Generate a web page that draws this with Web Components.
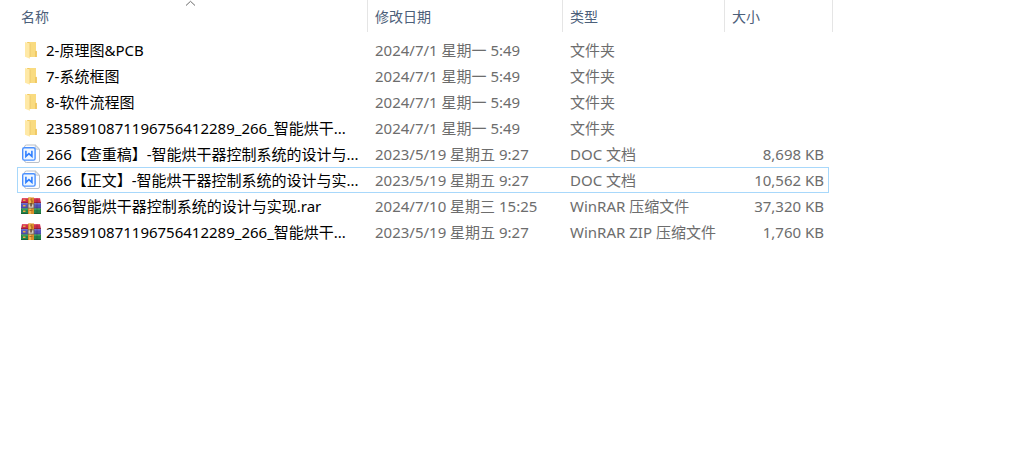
<!DOCTYPE html>
<html lang="zh-CN">
<head>
<meta charset="utf-8">
<meta name="viewport" content="width=device-width, initial-scale=1">
<title>文件列表</title>
<style>
  body {
    margin: 0;
    background: #fff;
    font: 15px/20px "Noto Sans", "Noto Sans CJK SC", sans-serif;
  }
</style>
</head>
<body>
<file-list></file-list>

<script>
const ICONS = {
  folder: `
    <svg viewBox="0 0 20 20" width="20" height="20" aria-hidden="true">
      <path d="M6 2h9v8.500l.8 1V17H6z" fill="#f3cb62"/>
      <path d="M8.500 2H15v15H8.500z" fill="#f9db80"/>
      <path d="M14 11h1.800v6H14z" fill="#f0c865"/>
      <path d="M4 2l5 1.600v15.200L4 16.800z" fill="#ffe9a6"/>
      <path d="M9 3.600v13.400" stroke="#eac568" stroke-width=".8"/>
    </svg>`,
  doc: `
    <svg viewBox="0 0 20 20" width="20" height="20" aria-hidden="true">
      <path d="M5.500 1h8.800L18.500 5.200v11.800a1.500 1.500 0 0 1-1.500 1.500H5.500A2 2 0 0 1 3.500 16.500V3A2 2 0 0 1 5.500 1z" fill="#fdfdfe" stroke="#b9c0ca"/>
      <path d="M14.300 1v2.700a1.500 1.500 0 0 0 1.500 1.500h2.700z" fill="#e6eaf0" stroke="#b9c0ca" stroke-width=".8"/>
      <rect x="1.700" y="3.700" width="12.400" height="12.400" rx="1.600" fill="#eef6ff" stroke="#4a90ff" stroke-width="1.400"/>
      <path d="M4.900 6.800v5.600L7.900 9.700l3 2.700V6.800" fill="none" stroke="#2f7fff" stroke-width="1.600"/>
    </svg>`,
  rar: `
    <svg viewBox="0 0 20 20" width="20" height="20" aria-hidden="true">
      <path d="M1 2h18l1 5H0z" fill="#c92b4b"/>
      <path d="M1 2h18v1.200H1z" fill="#e3526b"/>
      <path d="M0 6.400h20v.8H0z" fill="#7d1a30"/>
      <path d="M0 7.200h20v5H0z" fill="#5153ba"/>
      <path d="M1 7.200h18v1.200H1z" fill="#7471d2"/>
      <path d="M0 11.800h20v.8H0z" fill="#332c62"/>
      <path d="M0 12.600h20V18H0z" fill="#238349"/>
      <path d="M1 12.600h18v1.200H1z" fill="#3da762"/>
      <path d="M0 17.200h20v.8H0z" fill="#165a32"/>
      <path d="M2 3.500h2.500v1.500H2zM2 9h2.500v1.500H2zM2 14.500h2.500V16H2z" fill="#e6aa42"/>
      <path d="M15.500 2h1v16h-1z" fill="#332338" opacity=".25"/>
      <path d="M7 1.500h6V18H7z" fill="#d98c2b"/>
      <path d="M8 1.500h2V18H8z" fill="#f1b54e"/>
      <path d="M9.500 2.500h1v2h-1zM10.500 4.500h1v2h-1z" fill="#9b581c"/>
      <path d="M6.500 7.500h7v5h-7z" fill="#6f625a"/>
      <path d="M7.500 8.300h5v3.400h-5z" fill="#d5cdbd"/>
      <path d="M9.300 7h1.500v3.500H9.300z" fill="#69462c"/>
      <path d="M8.500 14h3v1h-3z" fill="#b06c22"/>
    </svg>`
};

const FILES = [
  { icon: "folder", name: "2-原理图&PCB", date: "2024/7/1 星期一 5:49", type: "文件夹", size: "" },
  { icon: "folder", name: "7-系统框图", date: "2024/7/1 星期一 5:49", type: "文件夹", size: "" },
  { icon: "folder", name: "8-软件流程图", date: "2024/7/1 星期一 5:49", type: "文件夹", size: "" },
  { icon: "folder", name: "2358910871196756412289_266_智能烘干...", date: "2024/7/1 星期一 5:49", type: "文件夹", size: "" },
  { icon: "doc", name: "266【查重稿】-智能烘干器控制系统的设计与...", date: "2023/5/19 星期五 9:27", type: "DOC 文档", size: "8,698 KB" },
  { icon: "doc", name: "266【正文】-智能烘干器控制系统的设计与实...", date: "2023/5/19 星期五 9:27", type: "DOC 文档", size: "10,562 KB", focused: true },
  { icon: "rar", name: "266智能烘干器控制系统的设计与实现.rar", date: "2024/7/10 星期三 15:25", type: "WinRAR 压缩文件", size: "37,320 KB" },
  { icon: "rar", name: "2358910871196756412289_266_智能烘干...", date: "2023/5/19 星期五 9:27", type: "WinRAR ZIP 压缩文件", size: "1,760 KB" }
];

class FileIcon extends HTMLElement {
  connectedCallback() {
    if (this.shadowRoot) {
      return;
    }
    this.attachShadow({ mode: "open" });
    this.shadowRoot.innerHTML = `
      <style>
        :host {
          display: block;
          flex: none;
          width: 20px;
          height: 20px;
        }

        svg {
          display: block;
        }
      </style>
      ${ICONS[this.getAttribute("kind")]}
    `;
  }
}

class ColumnHeader extends HTMLElement {
  constructor() {
    super();
    this.attachShadow({ mode: "open" });
    this.shadowRoot.innerHTML = `
      <style>
        :host {
          display: block;
          position: relative;
        }

        button {
          display: block;
          width: 100%;
          height: 32px;
          padding: 2px 0 0 var(--inset, 7px);
          border: 0;
          border-right: 1px solid #e5e5e5;
          background: none;
          color: #4c607a;
          font: inherit;
          font-size: 14px;
          text-align: left;
        }

        .arrow {
          display: none;
          position: absolute;
          top: 0;
          left: 50%;
          transform: translateX(-50%);
        }

        :host([sorted]) .arrow {
          display: block;
        }
      </style>
      <button type="button"><slot></slot></button>
      <svg class="arrow" viewBox="0 0 16 7" width="16" height="7" aria-hidden="true">
        <path d="M1 5.500l4.500-4.200L10 5.500" fill="none" stroke="#6b6b6b"/>
      </svg>
    `;
  }
}

class FileList extends HTMLElement {
  constructor() {
    super();
    this.attachShadow({ mode: "open" });
    this.shadowRoot.innerHTML = `
      <style>
        :host {
          display: block;
          padding-left: 17px;
        }

        table {
          width: 100%;
          table-layout: fixed;
          border-collapse: separate;
          border-spacing: 0;
        }

        .col-name { width: 351px; }
        .col-date { width: 195px; }
        .col-type { width: 162px; }
        .col-size { width: 104px; }
        .col-edge { width: 4px; }

        th {
          padding: 0;
          font-weight: normal;
        }

        th:first-child {
          --inset: 4px;
        }

        /* space between the header and the first row */
        tbody::before {
          content: "";
          display: block;
          height: 5px;
        }

        td {
          box-sizing: border-box;
          height: 26px;
          padding: 0 0 0 7px;
          border: solid transparent;
          border-width: 1px 0;
          color: #6d6d6d;
          white-space: nowrap;
        }

        td.name {
          padding-left: 3px;
          border-left-width: 1px;
          color: #000;
        }

        td.size {
          padding: 0 4px 0 0;
          border-right-width: 1px;
          text-align: right;
        }

        tr.focused td {
          border-color: #a8d8fb;
        }

        .entry {
          display: flex;
          align-items: center;
          gap: 5px;
        }
      </style>
      <table>
        <colgroup>
          <col class="col-name">
          <col class="col-date">
          <col class="col-type">
          <col class="col-size">
          <col class="col-edge">
          <col>
        </colgroup>
        <thead>
          <tr>
            <th scope="col" aria-sort="ascending"><column-header sorted>名称</column-header></th>
            <th scope="col"><column-header>修改日期</column-header></th>
            <th scope="col"><column-header>类型</column-header></th>
            <th scope="col" colspan="2"><column-header>大小</column-header></th>
          </tr>
        </thead>
        <tbody></tbody>
      </table>
    `;
  }

  connectedCallback() {
    this.setFiles(FILES);
  }

  setFiles(files) {
    this.shadowRoot.querySelector("tbody").replaceChildren(...files.map((file) => this.createRow(file)));
  }

  createRow(file) {
    const row = document.createElement("tr");
    row.classList.toggle("focused", Boolean(file.focused));
    row.innerHTML = `
      <td class="name"><div class="entry"><file-icon kind="${file.icon}"></file-icon><span></span></div></td>
      <td>${file.date}</td>
      <td>${file.type}</td>
      <td class="size">${file.size}</td>
    `;
    row.querySelector("span").textContent = file.name;
    return row;
  }
}

customElements.define("file-icon", FileIcon);
customElements.define("column-header", ColumnHeader);
customElements.define("file-list", FileList);
</script>
</body>
</html>
